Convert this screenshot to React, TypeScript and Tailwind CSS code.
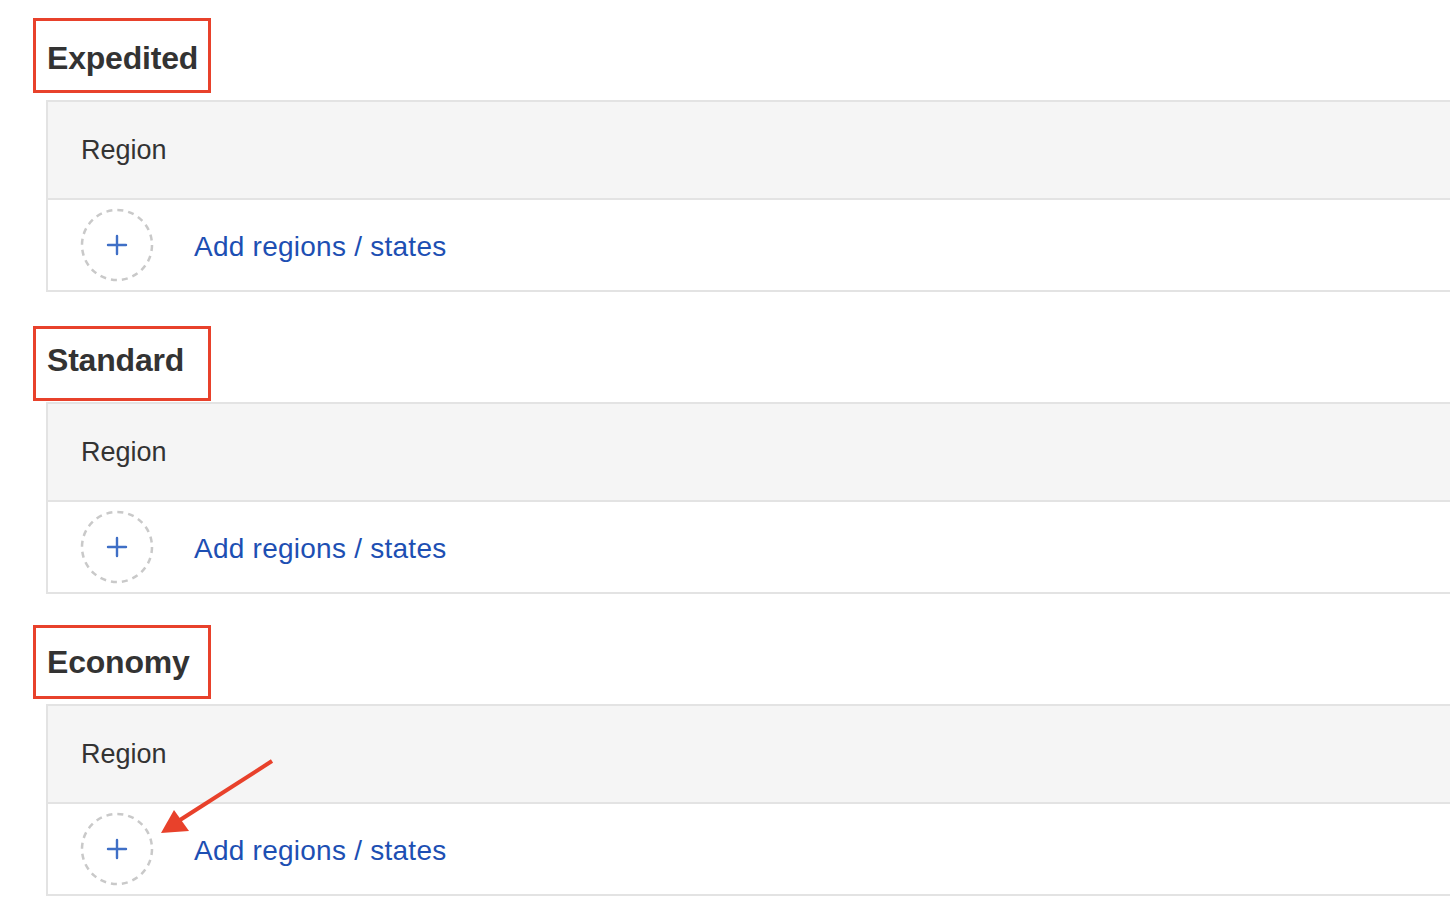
import React from "react";

const sections = ["Expedited", "Standard", "Economy"];

// Red annotation boxes drawn over the headings
const highlights = [
  { top: 18, height: 75 },
  { top: 326, height: 75 },
  { top: 625, height: 74 },
];

const AddCircle: React.FC = () => (
  <svg width="74" height="74" viewBox="0 0 74 74" className="shrink-0">
    <circle cx="37" cy="37" r="35" fill="none" stroke="#c9c9c9" strokeWidth="2.5" strokeDasharray="6 5" />
    <path d="M37 28v18M28 37h18" stroke="#3f6fc6" strokeWidth="2.4" strokeLinecap="round" />
  </svg>
);

const ShippingSection: React.FC<{ title: string }> = ({ title }) => (
  <div className="flex flex-col">
    <div className="h-[86px] flex items-center pl-[14px] pt-[2px]">
      <h2 className="text-[32px] font-bold text-[#333333] leading-none tracking-[-0.2px]">{title}</h2>
    </div>

    <div className="ml-[13px] w-[1420px] border-l-2 border-t-2 border-b-2 border-[#e3e3e3]">
      <div className="h-[98px] bg-[#f5f5f5] border-b-2 border-[#e3e3e3] flex items-center pl-[33px]">
        <span className="text-[27px] text-[#333333]">Region</span>
      </div>
      <div className="h-[90px] bg-white flex items-center pl-[32px] gap-[40px]">
        <AddCircle />
        <a className="text-[28px] tracking-[0.25px] text-[#1d4fb3] cursor-pointer pt-[3px]">Add regions / states</a>
      </div>
    </div>
  </div>
);

export default function App() {
  return (
    <div className="relative w-[1450px] h-[914px] bg-white overflow-hidden" style={{ fontFamily: "'Liberation Sans', Arial, sans-serif" }}>
      <div className="flex flex-col gap-[24px] pt-[14px] pl-[33px]">
        {sections.map((s) => (
          <ShippingSection key={s} title={s} />
        ))}
      </div>

      {highlights.map((h, i) => (
        <div
          key={i}
          className="absolute left-[33px] w-[178px] border-[3px] border-[#e8412b] pointer-events-none"
          style={{ top: h.top, height: h.height }}
        />
      ))}

      {/* Annotation arrow */}
      <svg className="absolute left-0 top-0 pointer-events-none" width="1450" height="914">
        <line x1="272" y1="761" x2="180" y2="820" stroke="#e8412b" strokeWidth="4" />
        <polygon points="161,833 174,810 189,831" fill="#e8412b" />
      </svg>
    </div>
  );
}
